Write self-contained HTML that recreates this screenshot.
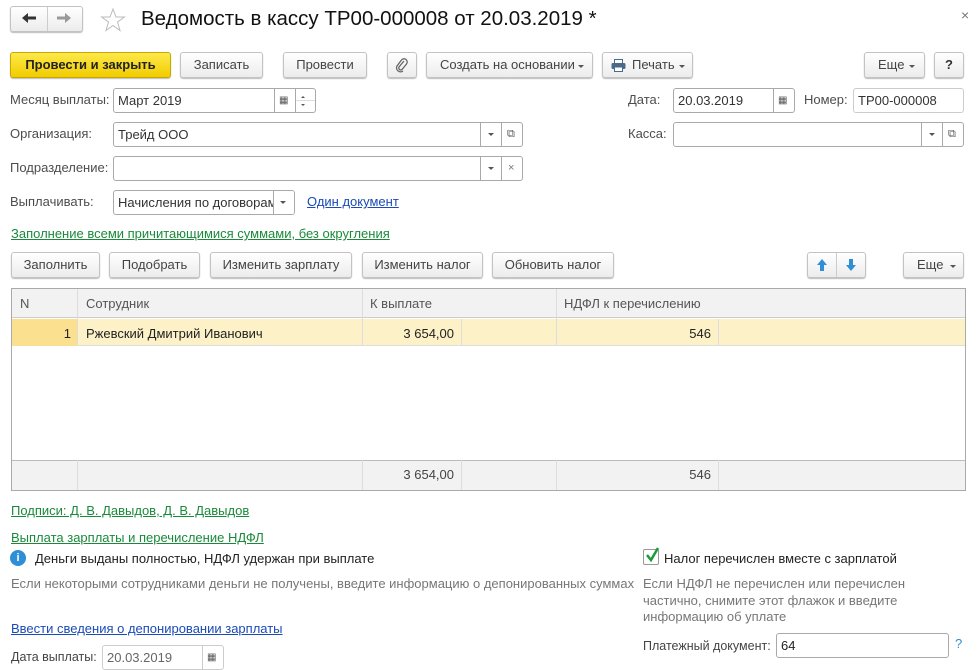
<!DOCTYPE html>
<html><head><meta charset="utf-8"><style>
*{box-sizing:border-box;margin:0;padding:0}
body{width:978px;height:666px;background:#fff;position:relative;overflow:hidden;font-family:"Liberation Sans",Arial,sans-serif;font-size:13px;color:#333}
.a{position:absolute}
.btn{position:absolute;height:26px;border:1px solid #c3c3c3;border-radius:3px;background:linear-gradient(#fff,#ececec);box-shadow:0 1px 1px #bbb;text-align:center;line-height:24px;color:#444;white-space:nowrap}
.in{position:absolute;height:25px;border:1px solid #a9a9a9;border-radius:3px;background:#fff;line-height:23px;padding-left:4px;color:#333;white-space:nowrap;overflow:hidden}
.sep{position:absolute;top:0;bottom:0;border-left:1px solid #a9a9a9}
.lbl{position:absolute;color:#4d4d4d;line-height:16px}
.dd{position:absolute;width:0;height:0;border-left:3px solid transparent;border-right:3px solid transparent;border-top:3px solid #555}
.c{font-size:13px}
a{text-decoration:underline}
.g{color:#1a8a3a}
.b{color:#1a4bb8}
.tbl{position:absolute;left:11px;top:288px;width:955px;height:203px;border:1px solid #a9a9a9;background:#fff}
.vl{position:absolute;border-left:1px solid #ddd}
</style></head><body>
<div class="btn" style="left:10px;top:6px;width:73px;height:26px;"></div>
<div class="a" style="left:47px;top:7px;height:24px;border-left:1px solid #ccc"></div>
<svg class="a" style="left:21px;top:12px" width="16" height="12" viewBox="0 0 16 12"><path d="M1 6 L7 1 V4.5 H15 V7.5 H7 V11 Z" fill="#333"/></svg>
<svg class="a" style="left:56px;top:12px" width="16" height="12" viewBox="0 0 16 12"><path d="M15 6 L9 1 V4.5 H1 V7.5 H9 V11 Z" fill="#999"/></svg>
<svg class="a" style="left:100px;top:7px" width="26" height="26" viewBox="0 0 26 26"><polygon points="13,2 16,10 24.5,10 17.5,15 20,23.5 13,18.5 6,23.5 8.5,15 1.5,10 10,10" fill="none" stroke="#bbb" stroke-width="1"/></svg>
<div class="a" style="left:141px;top:7px;font-size:20.5px;color:#111">Ведомость в кассу ТР00-000008 от 20.03.2019 *</div>
<div class="a" style="left:961px;top:7px;font-size:14px;color:#777">×</div>

<div class="btn" style="left:10px;top:52px;width:161px;background:linear-gradient(#fce94a,#f2cc00);border-color:#c9a800;font-weight:bold;color:#222">Провести и закрыть</div>
<div class="btn" style="left:180px;top:52px;width:83px">Записать</div>
<div class="btn" style="left:283px;top:52px;width:84px">Провести</div>
<div class="btn" style="left:387px;top:52px;width:30px"><svg width="14" height="16" viewBox="0 0 14 16" style="margin-top:5px"><path d="M9 3 L4 9 a2 2 0 0 0 3 2.5 L11.5 6 a3.2 3.2 0 0 0 -5 -4 L2 8 a4 4 0 0 0 6 5" fill="none" stroke="#666" stroke-width="1.3"/></svg></div>
<div class="btn" style="left:426px;top:52px;width:167px;text-align:left;padding-left:13px">Создать на основании<span class="dd" style="right:8px;top:12px"></span></div>
<div class="btn" style="left:602px;top:52px;width:91px;text-align:left;padding-left:29px">Печать<span class="dd" style="right:7px;top:12px"></span>
<svg class="a" style="left:8px;top:6px" width="15" height="13" viewBox="0 0 15 13"><rect x="3.5" y="0.5" width="8" height="4" fill="#fff" stroke="#4a6a8a"/><rect x="0.5" y="4" width="14" height="6" rx="1.5" fill="#4a6a8a"/><rect x="3.5" y="8" width="8" height="4.5" fill="#fff" stroke="#4a6a8a"/></svg></div>
<div class="btn" style="left:864px;top:52px;width:61px;text-align:left;padding-left:13px">Еще<span class="dd" style="right:9px;top:12px"></span></div>
<div class="btn" style="left:934px;top:52px;width:30px;font-weight:bold;color:#333">?</div>

<div class="lbl" style="left:10px;top:92px">Месяц выплаты:</div>
<div class="in" style="left:113px;top:88px;width:203px">Март 2019
 <div class="sep" style="left:160px"></div><div class="sep" style="left:181px"></div>
 <div class="a" style="left:165px;top:0;font-size:10px;color:#555">&#9638;</div>
 <div class="a" style="left:187px;top:7px;border-left:2px solid transparent;border-right:2px solid transparent;border-bottom:2px solid #555"></div>
 <div class="a" style="left:182px;top:11px;width:20px;border-top:1px solid #ddd"></div>
 <div class="a" style="left:187px;top:15px;border-left:2px solid transparent;border-right:2px solid transparent;border-top:2px solid #555"></div>
</div>
<div class="lbl" style="left:628px;top:92px">Дата:</div>
<div class="in" style="left:673px;top:88px;width:122px">20.03.2019<div class="sep" style="left:99px"></div><div class="a" style="left:104px;top:0;font-size:10px;color:#555">&#9638;</div></div>
<div class="lbl" style="left:804px;top:92px">Номер:</div>
<div class="in" style="left:853px;top:88px;width:111px;border-color:#ccc">ТР00-000008</div>

<div class="lbl" style="left:10px;top:126px">Организация:</div>
<div class="in" style="left:113px;top:122px;width:410px">Трейд ООО<div class="sep" style="left:366px"></div><div class="sep" style="left:387px"></div><span class="dd" style="left:374px;top:10px"></span><div class="a" style="left:393px;top:0;font-size:11px;color:#555">&#10697;</div></div>
<div class="lbl" style="left:628px;top:126px">Касса:</div>
<div class="in" style="left:673px;top:122px;width:291px"><div class="sep" style="left:247px"></div><div class="sep" style="left:268px"></div><span class="dd" style="left:255px;top:10px"></span><div class="a" style="left:274px;top:0;font-size:11px;color:#555">&#10697;</div></div>

<div class="lbl" style="left:10px;top:160px">Подразделение:</div>
<div class="in" style="left:113px;top:156px;width:410px"><div class="sep" style="left:366px"></div><div class="sep" style="left:387px"></div><span class="dd" style="left:374px;top:10px"></span><div class="a" style="left:394px;top:0;font-size:11px;color:#777">×</div></div>

<div class="lbl" style="left:10px;top:194px">Выплачивать:</div>
<div class="in" style="left:113px;top:190px;width:182px">Начисления по договорам<div class="a" style="left:159px;top:0;bottom:0;width:22px;background:#fff;border-left:1px solid #a9a9a9"></div><span class="dd" style="left:166px;top:10px"></span></div>
<a class="a b" style="left:307px;top:194px">Один документ</a>

<a class="a g" style="left:11px;top:226px">Заполнение всеми причитающимися суммами, без округления</a>

<div class="btn c" style="left:11px;top:252px;width:89px">Заполнить</div>
<div class="btn c" style="left:109px;top:252px;width:91px">Подобрать</div>
<div class="btn c" style="left:210px;top:252px;width:142px">Изменить зарплату</div>
<div class="btn c" style="left:362px;top:252px;width:121px">Изменить налог</div>
<div class="btn c" style="left:492px;top:252px;width:122px">Обновить налог</div>
<div class="btn" style="left:807px;top:252px;width:59px"><div class="a" style="left:28px;top:0;height:24px;border-left:1px solid #ccc"></div>
<svg class="a" style="left:8px;top:5px" width="12" height="14" viewBox="0 0 12 14"><path d="M6 1 L11 7 H8 V13 H4 V7 H1 Z" fill="#2e8fd6"/></svg>
<svg class="a" style="left:37px;top:5px" width="12" height="14" viewBox="0 0 12 14"><path d="M6 13 L11 7 H8 V1 H4 V7 H1 Z" fill="#2e8fd6"/></svg></div>
<div class="btn c" style="left:903px;top:252px;width:61px;text-align:left;padding-left:13px">Еще<span class="dd" style="right:7px;top:12px"></span></div>

<div class="tbl c">
 <div class="a" style="left:0;top:0;width:953px;height:29px;background:#f2f2f2;border-bottom:1px solid #ccc"></div>
 <div class="a" style="left:0;top:30px;width:953px;height:27px;background:#fdf1c8;border-bottom:1px solid #ddd"></div>
 <div class="a" style="left:0;top:30px;width:65px;height:27px;background:#fbe08f"></div>
 <div class="a" style="left:0;top:171px;width:953px;height:30px;background:#f2f2f2;border-top:1px solid #bbb"></div>
 <div class="vl" style="left:65px;top:0;height:57px"></div><div class="vl" style="left:350px;top:0;height:57px"></div><div class="vl" style="left:544px;top:0;height:57px"></div>
 <div class="vl" style="left:449px;top:30px;height:27px"></div><div class="vl" style="left:706px;top:30px;height:27px"></div>
 <div class="vl" style="left:65px;top:171px;height:30px"></div><div class="vl" style="left:350px;top:171px;height:30px"></div><div class="vl" style="left:449px;top:171px;height:30px"></div><div class="vl" style="left:544px;top:171px;height:30px"></div><div class="vl" style="left:706px;top:171px;height:30px"></div>
 <div class="a" style="left:8px;top:7px;color:#555">N</div>
 <div class="a" style="left:74px;top:7px;color:#555">Сотрудник</div>
 <div class="a" style="left:358px;top:7px;color:#555">К выплате</div>
 <div class="a" style="left:552px;top:7px;color:#555">НДФЛ к перечислению</div>
 <div class="a" style="left:0;width:59px;text-align:right;top:37px;color:#222">1</div>
 <div class="a" style="left:74px;top:37px;color:#222">Ржевский Дмитрий Иванович</div>
 <div class="a" style="left:350px;width:92px;text-align:right;top:37px;color:#222">3 654,00</div>
 <div class="a" style="left:544px;width:155px;text-align:right;top:37px;color:#222">546</div>
 <div class="a" style="left:350px;width:92px;text-align:right;top:178px;color:#444">3 654,00</div>
 <div class="a" style="left:544px;width:155px;text-align:right;top:178px;color:#444">546</div>
</div>

<a class="a g c" style="left:11px;top:503px">Подписи: Д. В. Давыдов, Д. В. Давыдов</a>
<a class="a g c" style="left:11px;top:530px">Выплата зарплаты и перечисление НДФЛ</a>
<div class="a" style="left:10px;top:550px;width:16px;height:16px;border-radius:50%;background:#2e8fd6;color:#fff;font-weight:bold;font-size:11px;text-align:center;line-height:16px">i</div>
<div class="a c" style="left:35px;top:551px;color:#222">Деньги выданы полностью, НДФЛ удержан при выплате</div>
<div class="a c" style="left:11px;top:576px;color:#777">Если некоторыми сотрудниками деньги не получены, введите информацию о депонированных суммах</div>
<a class="a b c" style="left:11px;top:621px">Ввести сведения о депонировании зарплаты</a>
<div class="a" style="left:11px;top:650px;color:#444;font-size:12.5px">Дата выплаты:</div>
<div class="in c" style="left:102px;top:645px;width:122px;border-color:#ccc;color:#666">20.03.2019<div class="sep" style="left:99px;border-color:#ccc"></div><div class="a" style="left:104px;top:0;font-size:10px;color:#555">&#9638;</div></div>

<div class="a" style="left:643px;top:549px;width:16px;height:16px;border:1px solid #999;border-radius:2px;background:#fff"></div>
<svg class="a" style="left:644px;top:546px" width="16" height="18" viewBox="0 0 16 18"><path d="M3 9 L7 14 L14 2" fill="none" stroke="#1a9a3a" stroke-width="2.5"/></svg>
<div class="a c" style="left:664px;top:551px;color:#222">Налог перечислен вместе с зарплатой</div>
<div class="a c" style="left:643px;top:576px;color:#777;line-height:16.5px">Если НДФЛ не перечислен или перечислен<br>частично, снимите этот флажок и введите<br>информацию об уплате</div>
<div class="a" style="left:643px;top:639px;color:#444;font-size:12.5px">Платежный документ:</div>
<div class="in c" style="left:776px;top:633px;width:173px;color:#222">64</div>
<div class="a" style="left:955px;top:636px;color:#2e8fd6">?</div>
</body></html>
